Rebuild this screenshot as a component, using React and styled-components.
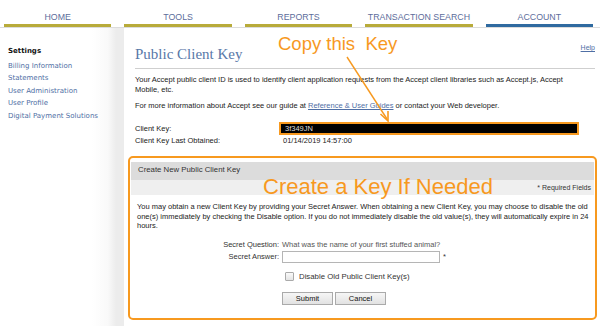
import React from "react";
import styled, { createGlobalStyle } from "styled-components";

const colors = {
  olive: "#b8ab3a",
  navy: "#2f6aa0",
  navText: "#5d6d9b",
  link: "#4f6fa5",
  title: "#5878a8",
  orange: "#f7991f",
  text: "#222",
};

const GlobalStyle = createGlobalStyle`
  body {
    margin: 0;
    background: #fff;
    font-family: "Liberation Sans", Arial, sans-serif;
    color: ${colors.text};
  }
`;

const tabs = ["HOME", "TOOLS", "REPORTS", "TRANSACTION SEARCH", "ACCOUNT"];
const menu = [
  "Billing Information",
  "Statements",
  "User Administration",
  "User Profile",
  "Digital Payment Solutions",
];

export default function App() {
  return (
    <Page>
      <GlobalStyle />
      <Nav>
        {tabs.map((t) => (
          <Tab key={t} active={t === "ACCOUNT"}>
            {t}
          </Tab>
        ))}
      </Nav>

      <Body>
        <Sidebar>
          <SideHead>Settings</SideHead>
          {menu.map((m) => (
            <SideLink key={m}>{m}</SideLink>
          ))}
        </Sidebar>

        <Main>
          <TitleRow>
            <Title>Public Client Key</Title>
            <Help>Help</Help>
          </TitleRow>

          <Para>
            Your Accept public client ID is used to identify client application
            requests from the Accept client libraries such as Accept.js, Accept
            Mobile, etc.
          </Para>
          <Para>
            For more information about Accept see our guide at{" "}
            <Link>Reference &amp; User Guides</Link> or contact your Web
            developer.
          </Para>

          <InfoGrid>
            <span>Client Key:</span>
            <KeyBox>3f349JN</KeyBox>
            <span>Client Key Last Obtained:</span>
            <DateValue>01/14/2019 14:57:00</DateValue>
          </InfoGrid>

          <Panel>
            <PanelHead>Create New Public Client Key</PanelHead>
            <PanelStrip>* Required Fields</PanelStrip>
            <PanelText>
              You may obtain a new Client Key by providing your Secret Answer.
              When obtaining a new Client Key, you may choose to disable the old
              one(s) immediately by checking the Disable option. If you do not
              immediately disable the old value(s), they will automatically
              expire in 24 hours.
            </PanelText>

            <Form>
              <FormLabel>Secret Question:</FormLabel>
              <Question>What was the name of your first stuffed animal?</Question>
              <FormLabel>Secret Answer:</FormLabel>
              <AnswerCell>
                <Input type="text" />
                <span>*</span>
              </AnswerCell>
              <span />
              <CheckRow>
                <Check />
                Disable Old Public Client Key(s)
              </CheckRow>
              <span />
              <Buttons>
                <Button>Submit</Button>
                <Button>Cancel</Button>
              </Buttons>
            </Form>
          </Panel>
        </Main>
      </Body>

      <Callout top={33} left={278} size={18.5}>
        Copy this  Key
      </Callout>
      <Callout top={174} left={263} size={22}>
        Create a Key If Needed
      </Callout>
      <ArrowSvg width="600" height="326" viewBox="0 0 600 326">
        <line x1="347" y1="57" x2="387" y2="119" stroke={colors.orange} strokeWidth="1.4" />
        <path d="M380.5 114 L388 121 L388 111" fill="none" stroke={colors.orange} strokeWidth="1.6" />
      </ArrowSvg>
    </Page>
  );
}

const Page = styled.div`
  position: relative;
  width: 600px;
  height: 326px;
  overflow: hidden;
`;

const Nav = styled.div`
  display: flex;
  gap: 13px;
  padding: 0 7px 0 4px;
  border-bottom: 1px solid #dcdcdc;
`;

const Tab = styled.div`
  flex: 1;
  text-align: center;
  font-size: 8.8px;
  color: ${colors.navText};
  padding-top: 12px;
  height: 12px;
  border-bottom: 3px solid ${(p) => (p.active ? colors.navy : colors.olive)};
`;

const Body = styled.div`
  display: flex;
`;

const Sidebar = styled.div`
  width: 116px;
  height: 300px;
  padding: 19px 0 0 8px;
  display: flex;
  flex-direction: column;
  gap: 4.6px;
  font-family: "DejaVu Sans", Verdana, sans-serif;
  font-size: 7px;
  background: linear-gradient(to right, #fff 92px, #f9f9f9 108px, #ececec 116px);
`;

const SideHead = styled.div`
  font-weight: bold;
  color: #111;
  margin-bottom: 2px;
`;

const SideLink = styled.div`
  color: ${colors.link};
`;

const Main = styled.div`
  flex: 1;
  padding: 0 3px 0 4px;
`;

const TitleRow = styled.div`
  display: flex;
  justify-content: space-between;
  align-items: flex-start;
  margin: 15px 2px 0 7px;
  padding-bottom: 5px;
  border-bottom: 1px solid #cfcfcf;
`;

const Title = styled.div`
  font-family: "Liberation Serif", Georgia, serif;
  font-size: 15px;
  color: ${colors.title};
  padding-top: 3px;
`;

const Help = styled.a`
  font-size: 7px;
  color: ${colors.link};
  text-decoration: underline;
  padding-top: 1px;
`;

const Para = styled.p`
  margin: 6px 22px 6px 7px;
  font-size: 7.5px;
  line-height: 10px;
`;

const Link = styled.a`
  color: ${colors.link};
  text-decoration: underline;
`;

const InfoGrid = styled.div`
  display: grid;
  grid-template-columns: 144px 300px;
  row-gap: 1px;
  align-items: center;
  margin: 11px 0 0 7px;
  font-size: 7.5px;
`;

const KeyBox = styled.div`
  height: 9px;
  line-height: 9px;
  background: #000;
  border: 2px solid ${colors.orange};
  color: #ddd;
  padding-left: 4px;
`;

const DateValue = styled.span`
  padding-left: 4px;
`;

const Panel = styled.div`
  margin-top: 11px;
  border: 2px solid ${colors.orange};
  border-radius: 5px;
  height: 160px;
  font-size: 7.5px;
`;

const PanelHead = styled.div`
  background: #dcdcdc;
  margin: 4px 1px 0;
  height: 18px;
  line-height: 16px;
  padding-left: 7px;
  font-size: 7.8px;
  color: #333;
`;

const PanelStrip = styled.div`
  background: #efefef;
  margin: 0 1px;
  height: 15px;
  line-height: 15px;
  text-align: right;
  padding-right: 3px;
  font-size: 7px;
  color: #333;
`;

const PanelText = styled.p`
  margin: 7px 4px 0 7px;
  line-height: 9.5px;
`;

const Form = styled.div`
  display: grid;
  grid-template-columns: 149px 1fr;
  column-gap: 3px;
  align-items: center;
  margin-top: 8px;
  color: #333;
`;

const FormLabel = styled.span`
  text-align: right;
  height: 12px;
  line-height: 12px;
`;

const Question = styled.span`
  color: #555;
`;

const AnswerCell = styled.div`
  display: flex;
  align-items: center;
  gap: 3px;
`;

const Input = styled.input`
  width: 158px;
  height: 12px;
  box-sizing: border-box;
  border: 1px solid #b5b5b5;
  margin: 0;
  padding: 0;
`;

const CheckRow = styled.label`
  display: flex;
  align-items: center;
  gap: 5px;
  margin: 8px 0 0 3px;
  height: 12px;
  font-size: 7.8px;
`;

const Check = styled.span`
  display: inline-block;
  width: 7px;
  height: 7px;
  border: 1px solid #aaa;
  border-radius: 1px;
  background: linear-gradient(#fafafa, #e4e4e4);
`;

const Buttons = styled.div`
  display: flex;
  gap: 2px;
  margin-top: 9px;
`;

const Button = styled.button`
  width: 51px;
  height: 13px;
  padding: 0;
  font-family: "Liberation Sans", Arial, sans-serif;
  font-size: 7.5px;
  color: #111;
  background: linear-gradient(#f6f6f6, #e2e2e2);
  border: 1px solid #aaa;
  border-radius: 0;
`;

const Callout = styled.div`
  position: absolute;
  top: ${(p) => p.top}px;
  left: ${(p) => p.left}px;
  font-size: ${(p) => p.size}px;
  color: ${colors.orange};
  white-space: pre;
  pointer-events: none;
`;

const ArrowSvg = styled.svg`
  position: absolute;
  top: 0;
  left: 0;
  pointer-events: none;
`;
